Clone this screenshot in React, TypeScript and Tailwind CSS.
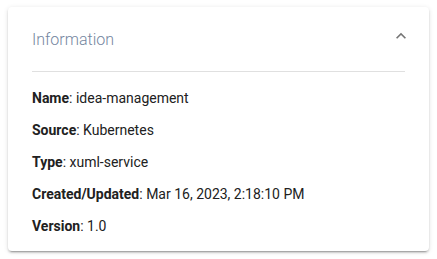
import React from "react";

const rows: [string, string][] = [
  ["Name", "idea-management"],
  ["Source", "Kubernetes"],
  ["Type", "xuml-service"],
  ["Created/Updated", "Mar 16, 2023, 2:18:10 PM"],
  ["Version", "1.0"],
];

export default function App() {
  return (
    <div className="w-[437px] h-[259px] bg-white pl-[8px] pt-[7px]" style={{ fontFamily: "Roboto, 'Liberation Sans', sans-serif" }}>
      <div className="w-[421px] h-[244px] bg-white rounded-[4px] shadow-[0px_3px_1px_-2px_rgba(0,0,0,0.2),0px_2px_2px_0px_rgba(0,0,0,0.14),0px_1px_5px_0px_rgba(0,0,0,0.12)] px-6">
        <div className="flex justify-between items-start h-[65px] border-b border-[#e0e0e0]">
          <div className="pt-[21px] text-[16px] leading-[24px] font-light text-[#7486a0]">Information</div>
          <svg className="mt-[19px] -mr-[6px] w-[20px] h-[20px]" viewBox="0 0 24 24" fill="#757575">
            <path d="M12 8l-6 6 1.41 1.41L12 10.83l4.59 4.58L18 14z" />
          </svg>
        </div>
        <div className="flex flex-col gap-[12px] pt-[16px]">
          {rows.map(([k, v]) => (
            <div key={k} className="text-[14px] leading-[20px] text-[#212121]">
              <span className="font-bold">{k}</span>: {v}
            </div>
          ))}
        </div>
      </div>
    </div>
  );
}
